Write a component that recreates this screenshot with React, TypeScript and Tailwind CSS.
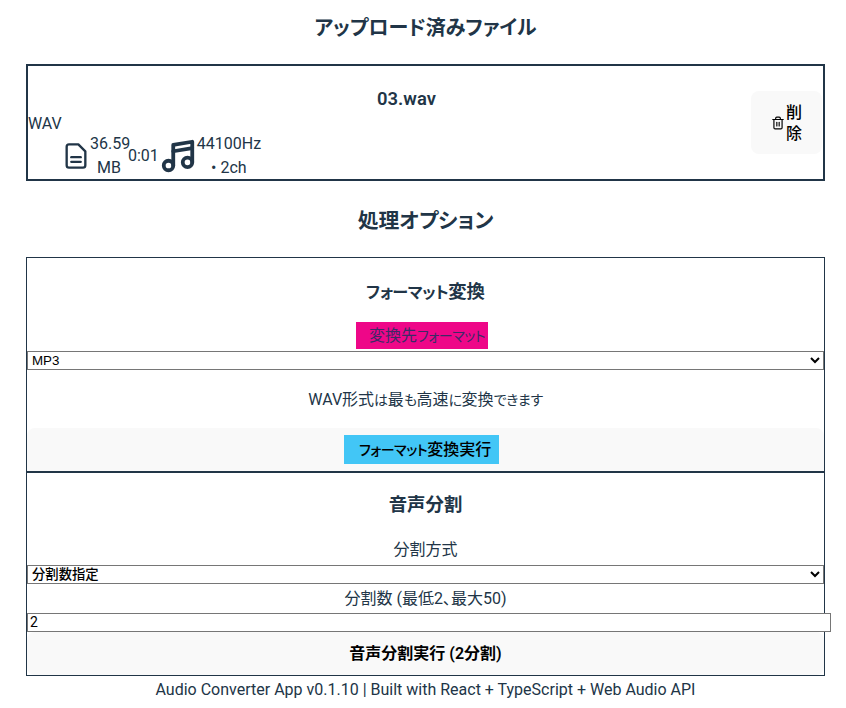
import type { ReactNode } from 'react'
import { Music4, Trash2 } from 'lucide-react'

const fontStack = 'font-["Roboto","Noto_Sans_CJK_JP",sans-serif] [font-feature-settings:"palt"]'

// kana sit smaller than kanji in the original font
function Kana({ children }: { children: ReactNode }) {
  return <span className="text-[0.875em] tracking-[-0.03em]">{children}</span>
}

function FileIcon() {
  return (
    <svg className="w-7 h-7 shrink-0" viewBox="0 0 24 24" fill="none" stroke="currentColor" strokeWidth={2} strokeLinecap="round" strokeLinejoin="round">
      <path d="M14 2H6a2 2 0 0 0-2 2v16a2 2 0 0 0 2 2h12a2 2 0 0 0 2-2V8Z" />
      <path d="M8 13h8" />
      <path d="M8 17h8" />
    </svg>
  )
}

function FileCard() {
  return (
    <div className="flex items-center border-2 border-[#213547] h-[117px]">
      <div className="flex-1 min-w-0 pt-[21px]">
        <h4 className="text-center text-[18.4px] font-semibold leading-[26px] mb-px pl-[34px]">03.wav</h4>
        <div className="text-base leading-[21px]">WAV</div>
        <div className="flex items-center pl-[34px] text-base leading-6 mt-[-2px]">
          <FileIcon />
          <span className="w-[38px] text-center">36.59 MB</span>
          <span>0:01</span>
          <Music4 className="w-[38px] h-[38px] shrink-0" strokeWidth={2.4} />
          <span className="w-[64px] text-center">44100Hz • 2ch</span>
        </div>
      </div>
      <button className="flex items-center justify-center gap-px w-[71px] h-[63px] mr-px rounded-lg bg-[#f9f9f9] text-black text-base font-medium leading-[21px]">
        <Trash2 className="w-[14px] h-[14px] shrink-0" strokeWidth={2} />
        <span className="w-4">削除</span>
      </button>
    </div>
  )
}

function FormatSection() {
  return (
    <section className="flex flex-col border-b-2 border-[#213547]">
      <h4 className="text-center text-[18.4px] font-semibold leading-[26px] mt-[21px] mb-4">
        <Kana>フォーマット</Kana>変換
      </h4>
      <div className="flex justify-center h-[27px] mb-[2px] pr-[7px]">
        <label className="bg-[#ee0788] w-[132px] pl-[13px] pr-[5px] text-center text-base leading-[27px] text-[#3c2a66] whitespace-nowrap">
          変換先<Kana>フォーマット</Kana>
        </label>
      </div>
      <select className='block w-full h-[19px] border border-[#767676] bg-white text-black font-["Liberation_Sans",sans-serif] text-[13.33px] leading-none'>
        <option>MP3</option>
      </select>
      <p className="text-center text-base leading-[21px] mt-[19px] mb-[17px]">
        WAV形式<Kana>は</Kana>最<Kana>も</Kana>高速<Kana>に</Kana>変換<Kana>できます</Kana>
      </p>
      <div className="flex items-center justify-center h-[43px] bg-[#f9f9f9] rounded-t-lg pr-[8px]">
        <span className="bg-[#42c6f6] w-[155px] h-[29px] pl-[15px] pr-[8px] text-center text-black text-base font-medium leading-[29px] whitespace-nowrap">
          <Kana>フォーマット</Kana>変換実行
        </span>
      </div>
    </section>
  )
}

function SplitSection() {
  return (
    <section className="flex flex-col">
      <h4 className="text-center text-[18.4px] font-semibold leading-[26px] mt-[19px] mb-[21px]">音声分割</h4>
      <label className="text-center text-base leading-[21px] mb-[5px]">分割方式</label>
      <select className='block w-full h-[19px] border border-[#767676] bg-white text-black font-["Liberation_Sans","Noto_Sans_CJK_JP",sans-serif] text-[13.33px] font-medium leading-none'>
        <option>分割数指定</option>
      </select>
      <label className="text-center text-base leading-[21px] mt-1 mb-1">分割数 (最低2、最大50)</label>
      <input
        className="block w-[804px] h-[19px] border border-[#767676] bg-white text-black text-[14px] px-[2px]"
        defaultValue="2"
      />
      <button className="h-[43px] bg-[#f9f9f9] rounded-lg text-black text-base font-semibold">音声分割実行 (2分割)</button>
    </section>
  )
}

export default function App() {
  return (
    <div className={`${fontStack} w-[846px] h-[708px] overflow-hidden bg-white text-[#213547] px-[26px]`}>
      <h3 className="text-center text-[20px] font-semibold leading-[32px] mt-3 mb-5 pl-[5px]">アップロード済みファイル</h3>
      <div className="w-[799px]">
        <FileCard />
        <h3 className="text-center text-[20.8px] font-semibold leading-[30px] mt-[25px] mb-[21px]">処理オプション</h3>
        <div className="border border-[#213547]">
          <FormatSection />
          <SplitSection />
        </div>
        <p className="text-center text-base leading-[21px] mt-[3px]">Audio Converter App v0.1.10 | Built with React + TypeScript + Web Audio API</p>
      </div>
    </div>
  )
}
